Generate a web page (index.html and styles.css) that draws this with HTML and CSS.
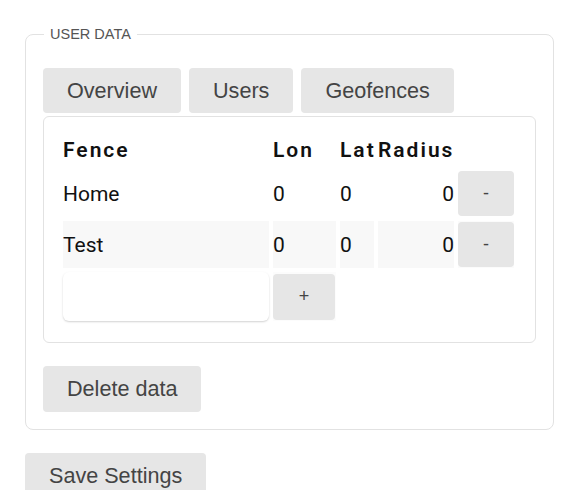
FILE: index.html
```html
<!DOCTYPE html>
<html>
<head>
<meta charset="utf-8">
<link rel="stylesheet" href="styles.css">
</head>
<body>
<div class="page">
  <fieldset class="group">
    <legend class="group-title">USER DATA</legend>
    <div class="tabs">
      <button class="btn tab">Overview</button>
      <button class="btn tab">Users</button>
      <button class="btn tab">Geofences</button>
    </div>
    <div class="panel">
      <table class="fences">
        <thead>
          <tr>
            <th class="c-name">Fence</th>
            <th class="c-lon">Lon</th>
            <th class="c-lat">Lat</th>
            <th class="c-rad">Radius</th>
            <th class="c-act"></th>
          </tr>
        </thead>
        <tbody>
          <tr>
            <td>Home</td>
            <td>0</td>
            <td>0</td>
            <td class="num">0</td>
            <td class="act"><button class="btn small">-</button></td>
          </tr>
          <tr class="alt">
            <td>Test</td>
            <td>0</td>
            <td>0</td>
            <td class="num">0</td>
            <td class="act"><button class="btn small">-</button></td>
          </tr>
          <tr class="new">
            <td class="inp"><input class="field" type="text"></td>
            <td class="act"><button class="btn small plus">+</button></td>
            <td class="empty" colspan="3"></td>
          </tr>
        </tbody>
      </table>
    </div>
    <button class="btn action">Delete data</button>
  </fieldset>
  <button class="btn action save">Save Settings</button>
</div>
</body>
</html>
```

FILE: styles.css
```css
html, body {
  margin: 0;
  padding: 0;
  background: #fff;
}
.page {
  height: 490px;
  overflow: hidden;
  padding: 0 25px 0 25px;
  box-sizing: border-box;
  font-family: "Liberation Sans", Arial, sans-serif;
}
.group {
  margin: 26px 0 0 0;
  padding: 26px 17px 17px 17px;
  border: 1px solid #e2e2e2;
  border-radius: 8px;
}
.group-title {
  font-size: 14.5px;
  color: #555;
  padding: 0 6px;
  margin-left: 1px;
}
.btn {
  display: block;
  font-family: "Liberation Sans", Arial, sans-serif;
  background: #e6e6e6;
  border: none;
  border-radius: 4px;
  color: #444;
  font-size: 21.6px;
  cursor: pointer;
}
.tabs {
  display: flex;
  gap: 8px;
}
.tab {
  height: 45px;
  padding: 0 24px;
}
.panel {
  margin-top: 3px;
  border: 1px solid #e2e2e2;
  border-radius: 6px;
  padding: 12px 15px 17px 15px;
}
.fences {
  table-layout: fixed;
  width: 459px;
  border-spacing: 4px;
  font-family: Roboto, "Liberation Sans", sans-serif;
  font-size: 21px;
  color: #111;
}
.fences th {
  text-align: left;
  font-weight: 600;
  letter-spacing: 2px;
  height: 33px;
  padding: 0;
  white-space: nowrap;
  overflow: visible;
}
.c-name { width: 206px; }
.c-lon { width: 63px; }
.c-lat { width: 34px; }
.c-rad { width: 76px; }
.c-act { width: 56px; }
.fences td {
  height: 47px;
  padding: 0;
}
.fences .num {
  text-align: right;
}
.alt td {
  background: #f8f8f8;
}
.alt td.act {
  background: #fbfbfb;
}
.small {
  width: 56px;
  height: 45px;
  font-size: 18px;
}
.plus {
  width: 62px;
  height: 46px;
}
.new td.act {
  background: #fcfcfc;
}
.field {
  display: block;
  width: 100%;
  height: 49px;
  box-sizing: border-box;
  border: none;
  border-radius: 6px;
  box-shadow: 0 1px 2px rgba(0,0,0,0.18);
  background: #fff;
  margin: 0;
}
.action {
  height: 46px;
  padding: 0 24px;
  margin-top: 23px;
}
.save {
  margin-top: 23px;
}
```
